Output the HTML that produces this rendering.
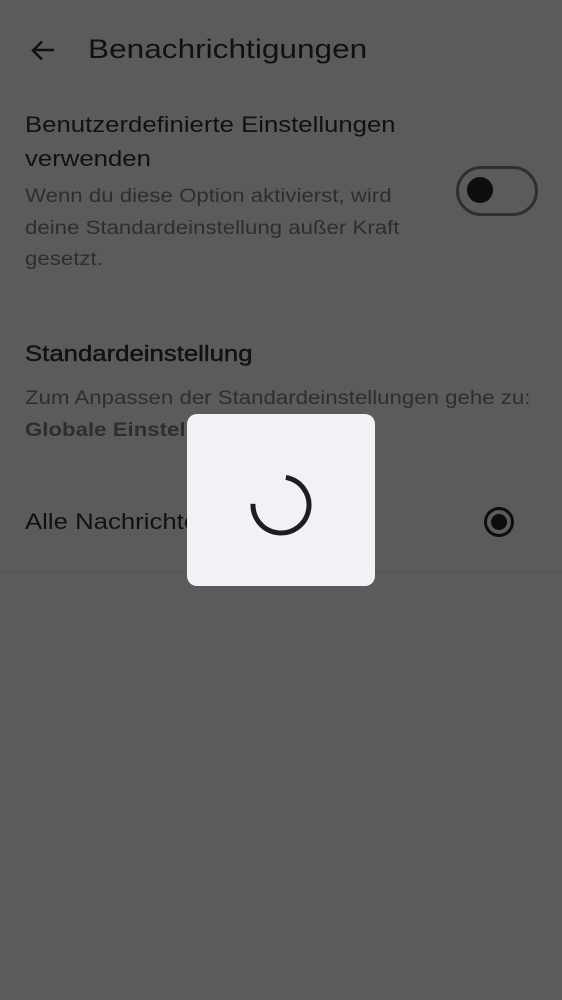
<!DOCTYPE html>
<html><head><meta charset="utf-8"><style>
body{margin:0;width:562px;height:1000px;background:#5b5b5b;font-family:"Liberation Sans",Roboto,sans-serif;position:relative;overflow:hidden}
.a{position:absolute;white-space:nowrap}
.s{transform:scaleX(1.17);transform-origin:0 0}
</style></head><body>
<svg class="a" style="left:28px;top:36px" width="30" height="30" viewBox="0 0 30 30"><path d="M26 14H6M14 5.5L5 14.5L14 23.5" fill="none" stroke="#111" stroke-width="2.6"/></svg>
<div class="a s" style="left:88px;top:34px;font-size:27px;color:#111">Benachrichtigungen</div>
<div class="a s" style="left:25px;top:108px;font-size:22px;line-height:34px;color:#111">Benutzerdefinierte Einstellungen<br>verwenden</div>
<div class="a s" style="left:25px;top:181px;font-size:19px;line-height:31.5px;color:#2e2e30">Wenn du diese Option aktivierst, wird<br>deine Standardeinstellung außer Kraft<br>gesetzt.</div>
<div class="a" style="left:456px;top:166px;width:76px;height:44px;border:3px solid #2f2f31;border-radius:26px"></div>
<div class="a" style="left:467px;top:177px;width:26px;height:26px;border-radius:50%;background:#0d0d0f"></div>
<div class="a s" style="left:25px;top:341px;font-size:22px;color:#111;-webkit-text-stroke:0.4px #111">Standardeinstellung</div>
<div class="a s" style="left:25px;top:388px;font-size:19px;color:#2e2e30">Zum Anpassen der Standardeinstellungen gehe zu:</div>
<div class="a s" style="left:25px;top:420px;font-size:19px;color:#2e2e30;font-weight:bold">Globale Einstellungen</div>
<div class="a s" style="left:25px;top:509px;font-size:22px;color:#111">Alle Nachrichten</div>
<div class="a" style="left:484px;top:507px;width:30px;height:30px;border:3.5px solid #0d0d0f;border-radius:50%;box-sizing:border-box"></div>
<div class="a" style="left:491px;top:514px;width:16px;height:16px;border-radius:50%;background:#0d0d0f"></div>
<div class="a" style="left:0;top:572px;width:562px;height:1px;background:#525252"></div>
<div class="a" style="left:187px;top:414px;width:188px;height:172px;background:#f1f2f5;border-radius:10px"></div>
<svg class="a" style="left:249px;top:473px" width="64" height="64" viewBox="0 0 64 64"><circle cx="32" cy="32" r="28" fill="none" stroke="#1d1e22" stroke-width="5" stroke-dasharray="128 48" transform="rotate(-80 32 32)"/></svg>
</body></html>
